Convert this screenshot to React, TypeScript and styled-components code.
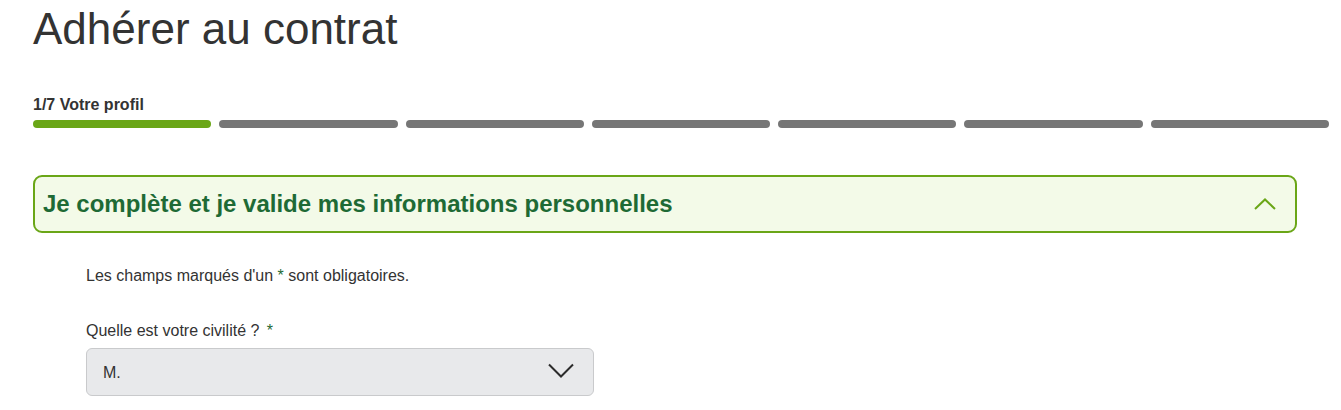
import React, { useState } from 'react';
import styled, { createGlobalStyle } from 'styled-components';

const TOTAL_STEPS = 7;
const CURRENT_STEP = 1;

export default function App() {
  const [open, setOpen] = useState(true);
  const [civility, setCivility] = useState('M.');

  return (
    <>
      <GlobalStyle />
      <Page>
        <Title>Adhérer au contrat</Title>
        <Stepper>
          <StepLabel>
            {CURRENT_STEP}/{TOTAL_STEPS} Votre profil
          </StepLabel>
          <StepBars>
            {Array.from({ length: TOTAL_STEPS }).map((_, i) => (
              <StepBar key={i} $active={i < CURRENT_STEP} />
            ))}
          </StepBars>
        </Stepper>

        <AccordionHeader type="button" onClick={() => setOpen(!open)}>
          <AccordionTitle>Je complète et je valide mes informations personnelles</AccordionTitle>
          <Chevron width="22" height="12" viewBox="0 0 22 12" $open={open}>
            <path d="M1 11 L11 1.5 L21 11" fill="none" stroke="#6aa617" strokeWidth="2" />
          </Chevron>
        </AccordionHeader>

        {open && (
          <FormBody>
            <Hint>
              Les champs marqués d'un <Required>*</Required> sont obligatoires.
            </Hint>
            <Field>
              <Label>
                Quelle est votre civilité ? <Required>*</Required>
              </Label>
              <SelectWrap>
                <Select value={civility} onChange={(e) => setCivility(e.target.value)}>
                  <option value="M.">M.</option>
                  <option value="Mme">Mme</option>
                </Select>
                <SelectArrow width="26" height="15" viewBox="0 0 26 15">
                  <path d="M1 1.5 L13 13.5 L25 1.5" fill="none" stroke="#2b2b2b" strokeWidth="2" />
                </SelectArrow>
              </SelectWrap>
            </Field>
          </FormBody>
        )}
      </Page>
    </>
  );
}

const GlobalStyle = createGlobalStyle`
  html, body {
    margin: 0;
    padding: 0;
    background: #ffffff;
  }
  body {
    font-family: "Liberation Sans", Arial, sans-serif;
    color: #333333;
  }
`;

const Page = styled.div`
  padding: 0 12px 0 33px;
  display: flex;
  flex-direction: column;
`;

const Title = styled.h1`
  margin: 4px 0 0;
  font-size: 44px;
  line-height: 50px;
  font-weight: normal;
  color: #333333;
`;

const Stepper = styled.div`
  margin-top: 42px;
  display: flex;
  flex-direction: column;
  gap: 6px;
`;

const StepLabel = styled.div`
  font-size: 16px;
  line-height: 18px;
  font-weight: bold;
  color: #333333;
`;

const StepBars = styled.div`
  display: grid;
  grid-template-columns: repeat(${TOTAL_STEPS}, 1fr);
  gap: 8px;
`;

const StepBar = styled.div<{ $active: boolean }>`
  height: 8px;
  border-radius: 4px;
  background: ${(p) => (p.$active ? '#6aa617' : '#767676')};
`;

const AccordionHeader = styled.button`
  margin-top: 47px;
  width: 1264px;
  height: 58px;
  box-sizing: border-box;
  display: flex;
  align-items: center;
  justify-content: space-between;
  padding: 0 19px 0 8px;
  background: #f3fae8;
  border: 2px solid #6aa617;
  border-radius: 9px;
  cursor: pointer;
  font-family: inherit;
  text-align: left;
`;

const AccordionTitle = styled.span`
  font-size: 24px;
  font-weight: bold;
  color: #1e6a35;
`;

const Chevron = styled.svg<{ $open: boolean }>`
  transform: ${(p) => (p.$open ? 'none' : 'rotate(180deg)')};
`;

const FormBody = styled.div`
  padding: 33px 0 0 53px;
  display: flex;
  flex-direction: column;
`;

const Hint = styled.p`
  margin: 0;
  font-size: 16px;
  line-height: 20px;
  color: #333333;
`;

const Required = styled.span`
  color: #1e6a35;
`;

const Field = styled.div`
  margin-top: 35px;
  display: flex;
  flex-direction: column;
  gap: 7px;
`;

const Label = styled.label`
  font-size: 16px;
  line-height: 20px;
  color: #333333;

  ${Required} {
    margin-left: 3px;
  }
`;

const SelectWrap = styled.div`
  position: relative;
  width: 508px;
`;

const Select = styled.select`
  width: 100%;
  height: 48px;
  box-sizing: border-box;
  appearance: none;
  padding: 0 50px 0 16px;
  background: #e8e9eb;
  border: 1px solid #c9cacc;
  border-radius: 6px;
  font-family: "Liberation Sans", Arial, sans-serif;
  font-size: 16px;
  color: #333333;
  outline: none;
`;

const SelectArrow = styled.svg`
  position: absolute;
  right: 20px;
  top: 15px;
  pointer-events: none;
`;
